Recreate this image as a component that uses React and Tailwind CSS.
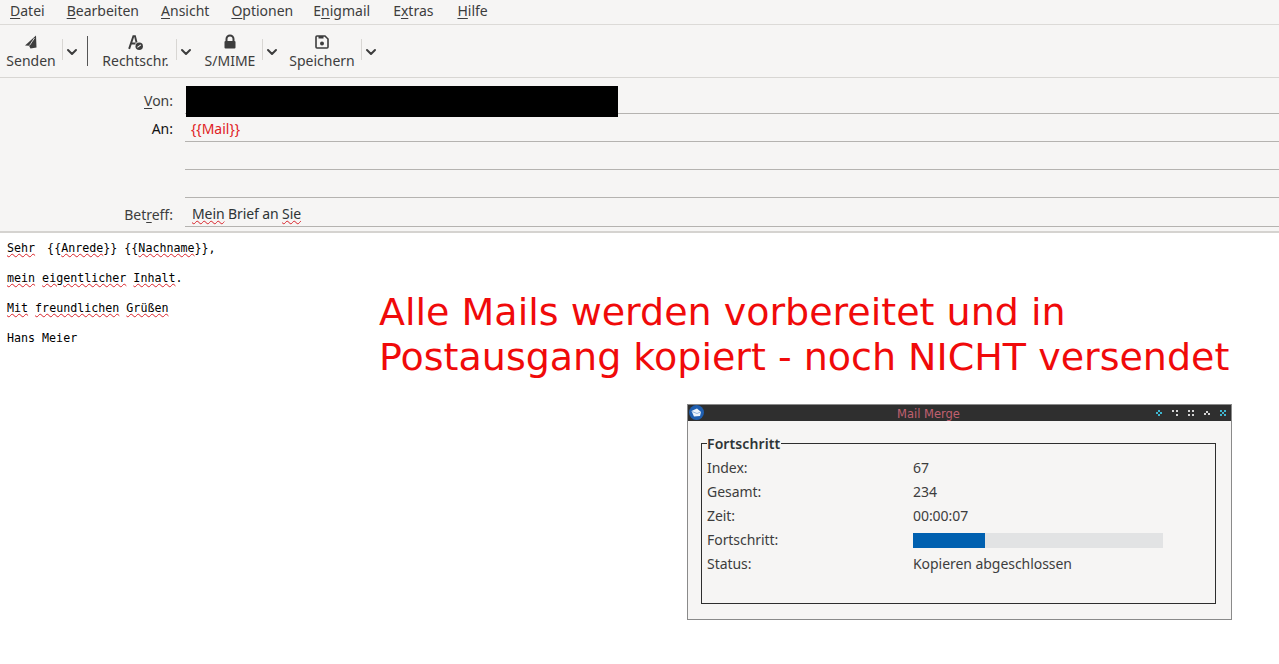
import { ChevronDown } from "lucide-react";

const menus = [
  ["D", "atei"],
  ["B", "earbeiten"],
  ["A", "nsicht"],
  ["O", "ptionen", null, "-mr-[2px]"],
  ["E", "nigmail", "n", "mr-px"],
  ["E", "xtras", "x", "mr-[2px]"],
  ["H", "ilfe"],
];

function MenuItem({ item }) {
  if (item[2]) {
    return (
      <span className={item[3]}>
        {item[0]}
        <span className="underline underline-offset-2">{item[2]}</span>
        {item[1].slice(1)}
      </span>
    );
  }
  return (
    <span className={item[3]}>
      <span className="underline underline-offset-2">{item[0]}</span>
      {item[1]}
    </span>
  );
}

function ToolButton({ icon, label, className }) {
  return (
    <div className="flex h-[52px] items-center">
      <div className={`flex flex-col items-center pt-0.5 ${className}`}>
        <div className="flex h-[18px] items-center text-[#3d3d3d]">{icon}</div>
        <div className="whitespace-nowrap text-[14px] leading-[20px] text-[#3d3d3d]">{label}</div>
      </div>
      <div className="mb-1 h-[21px] w-px bg-[#d8d6d3]" />
      <div className="flex h-[30px] w-[18px] items-start justify-center pt-2">
        <ChevronDown className="h-4 w-4 text-[#3d3d3d]" strokeWidth={3} />
      </div>
    </div>
  );
}

function Wavy({ children }) {
  return <span className="underline decoration-[#d8232a] decoration-wavy decoration-1 underline-offset-1">{children}</span>;
}

function HeaderRow({ label, className, labelClass = "pb-[3px]", children }) {
  return (
    <div className={`flex ${className}`}>
      <div className={`flex w-[173px] shrink-0 items-end justify-end text-[14px] leading-[20px] text-[#3d3d3d] ${labelClass}`}>{label}</div>
      <div className="ml-3 flex-1 border-b border-[#b5b3b0] pl-1.5 text-[14px] leading-[20px]">{children}</div>
    </div>
  );
}

function ProgressRow({ label, children }) {
  return (
    <div className="flex h-6 items-center">
      <div className="w-[206px] shrink-0">{label}</div>
      <div className="flex-1">{children}</div>
    </div>
  );
}

export default function App() {
  return (
    <div className="relative h-[664px] w-[1279px] overflow-hidden bg-white font-['Noto_Sans',sans-serif] text-[#3d3d3d]">
      {/* Menüleiste */}
      <div className="flex h-[25px] items-center gap-[22px] border-b border-[#dddbd8] bg-[#f6f5f4] pb-0.5 pl-2.5 text-[14px] leading-[20px]">
        {menus.map((m) => (
          <MenuItem key={m[0] + m[1]} item={m} />
        ))}
      </div>

      {/* Toolbar */}
      <div className="flex h-[53px] items-center border-b border-[#d8d6d3] bg-[#f6f5f4] shadow-[0_1px_2px_rgba(0,0,0,0.08)]">
        <ToolButton
          className="w-[62px]"
          label="Senden"
          icon={
            <svg className="h-[14px] w-[14px]" viewBox="0 0 14 14">
              <path d="M12 0.5 L1 10.5 L5 10.8 L6.5 13.5 L12.5 12.5 Z" fill="currentColor" />
              <path d="M10.5 3 L5.5 10.5" stroke="#f6f5f4" strokeWidth="0.8" />
            </svg>
          }
        />
        <div className="ml-[6px] mr-[7px] h-[30px] w-px bg-[#555]" />
        <ToolButton
          className="w-[81px]"
          label="Rechtschr."
          icon={
            <svg className="h-[17px] w-[17px]" viewBox="0 0 16 16">
              <path d="M2 14 L6 2 H7.5 L9 8 M3.5 9 H8" fill="none" stroke="currentColor" strokeWidth="1.8" />
              <circle cx="11.5" cy="11.5" r="3.5" fill="currentColor" />
              <path d="M9.8 12.6 L13 10.2" stroke="#f6f5f4" strokeWidth="1" />
            </svg>
          }
        />
        <div className="w-[3px]" />
        <ToolButton
          className="w-[64px]"
          label="S/MIME"
          icon={
            <svg className="h-4 w-4" viewBox="0 0 16 16">
              <path d="M4.5 7 V5 a3.5 3.5 0 0 1 7 0 V7" fill="none" stroke="currentColor" strokeWidth="2" />
              <rect x="2.5" y="7" width="11" height="7.5" rx="1" fill="currentColor" />
            </svg>
          }
        />
        <div className="w-[2px]" />
        <ToolButton
          className="w-[78px]"
          label="Speichern"
          icon={
            <svg className="h-4 w-4" viewBox="0 0 16 16">
              <path d="M3 2 H11 L14 5 V13 a1 1 0 0 1 -1 1 H3 a1 1 0 0 1 -1 -1 V3 a1 1 0 0 1 1 -1 Z" fill="none" stroke="currentColor" strokeWidth="1.6" />
              <rect x="4.5" y="2" width="5" height="2.5" fill="currentColor" />
              <circle cx="8" cy="9.5" r="2" fill="currentColor" />
            </svg>
          }
        />
      </div>

      {/* Kopfzeilen */}
      <div className="h-[155px] border-b-2 border-[#d5d3d0] bg-[#f6f5f4]">
        <HeaderRow className="h-9" label={<span><span className="underline underline-offset-2">V</span>on:</span>} />
        <HeaderRow className="h-7" label={<span className="text-[#111]">An:</span>}>
          <div className="flex h-full items-center pt-0.5 text-[#e01b24]">{"{{Mail}}"}</div>
        </HeaderRow>
        <HeaderRow className="h-7" />
        <HeaderRow className="h-7" />
        <HeaderRow className="h-[29px]" labelClass="pb-0.5" label={<span>Bet<span className="underline underline-offset-2">r</span>eff:</span>}>
          <div className="pl-px pt-1.5 tracking-[-0.1px] text-[#2e3436]">
            <Wavy>Mein</Wavy> Brief an <Wavy>Sie</Wavy>
          </div>
        </HeaderRow>
      </div>

      {/* Nachrichtentext */}
      <div className="pl-[7px] pt-2 font-['DejaVu_Sans_Mono',monospace] text-[11.66px] leading-[14px] text-black">
        <p className="mb-4 whitespace-pre">
          <Wavy>Sehr</Wavy>
          <span className="-ml-[2px]">{"  {{"}</span>
          <Wavy>Anrede</Wavy>
          {"}} {{"}
          <Wavy>Nachname</Wavy>
          {"}},"}
        </p>
        <p className="mb-4">
          <Wavy>mein</Wavy> <Wavy>eigentlicher</Wavy> <Wavy>Inhalt</Wavy>.
        </p>
        <p className="mb-4">
          <Wavy>Mit</Wavy> <Wavy>freundlichen</Wavy> <Wavy>Grüßen</Wavy>
        </p>
        <p>Hans Meier</p>
      </div>

      {/* Schwärzung über dem Absender */}
      <div className="absolute left-[186px] top-[86px] h-[31px] w-[432px] bg-black" />

      {/* Anmerkung */}
      <div className="absolute left-[379px] top-[290px] whitespace-nowrap font-['DejaVu_Sans',sans-serif] text-[38px] leading-[45px] text-[#f00a0a]">
        Alle Mails werden vorbereitet und in
        <br />
        Postausgang kopiert - noch NICHT versendet
      </div>

      {/* Mail Merge Dialog */}
      <div className="absolute left-[687px] top-[404px] h-[216px] w-[545px] border border-[#8a8a8a] bg-[#f6f5f4]">
        <div className="relative flex h-[16px] items-center justify-center bg-[#2f2f2f] pr-[62px] pt-1 font-['DejaVu_Sans',sans-serif] text-[11.5px] text-[#c0606f]">
          <svg className="absolute left-px top-0 h-[15px] w-[15px]" viewBox="0 0 15 15">
            <circle cx="7.5" cy="7.5" r="7.5" fill="#1f5fb0" />
            <path d="M2.5 6 L8 3.5 L12 7 L11 11 L5 11.5 Z" fill="#eef4fb" />
            <path d="M3 6.5 L8 8.5 L11.5 7" fill="none" stroke="#7da6d8" strokeWidth="0.8" />
          </svg>
          Mail Merge
          <div className="absolute right-[5px] top-[5px] flex gap-[10px]">
            <svg className="h-[6px] w-[6px]" viewBox="0 0 6 6"><path d="M2 0h2v2h2v2H4v2H2V4H0V2h2z" fill="#3fb6cf" /><path d="M2 2h2v2H2z" fill="#2f2f2f" /></svg>
            <svg className="h-[6px] w-[6px]" viewBox="0 0 6 6"><path d="M0 0h2v2H0zM4 0h2v2H4zM4 4h2v2H4z" fill="#d5d5d5" /></svg>
            <svg className="h-[6px] w-[6px]" viewBox="0 0 6 6"><path d="M0 0h2v2H0zM4 0h2v2H4zM0 4h2v2H0zM4 4h2v2H4z" fill="#d5d5d5" /></svg>
            <svg className="h-[6px] w-[6px]" viewBox="0 0 6 6"><path d="M2 1h2v2h2v2H4V3H2v2H0V3h2z" fill="#d5d5d5" /></svg>
            <svg className="h-[6px] w-[6px]" viewBox="0 0 6 6"><path d="M0 0h2v2H0zM4 0h2v2H4zM2 2h2v2H2zM0 4h2v2H0zM4 4h2v2H4z" fill="#3fb6cf" /></svg>
          </div>
        </div>
        <div className="relative ml-[13px] mt-[22px] h-[161px] w-[515px] border border-[#2e2e2e] pl-[5px] pt-3 text-[14px] leading-[20px] tracking-[-0.05px]">
          <div className="absolute -top-[10px] left-[5px] bg-[#f6f5f4] pr-px text-[14px] font-semibold leading-[20px] tracking-[0.1px] text-[#2e3436]">Fortschritt</div>
          <ProgressRow label="Index:">67</ProgressRow>
          <ProgressRow label="Gesamt:">234</ProgressRow>
          <ProgressRow label="Zeit:">00:00:07</ProgressRow>
          <ProgressRow label="Fortschritt:">
            <div className="h-[15px] w-[250px] bg-[#e2e3e4]">
              <div className="h-full bg-[#0060b0]" style={{ width: `${(67 / 234) * 100}%` }} />
            </div>
          </ProgressRow>
          <ProgressRow label="Status:">Kopieren abgeschlossen</ProgressRow>
        </div>
      </div>
    </div>
  );
}
